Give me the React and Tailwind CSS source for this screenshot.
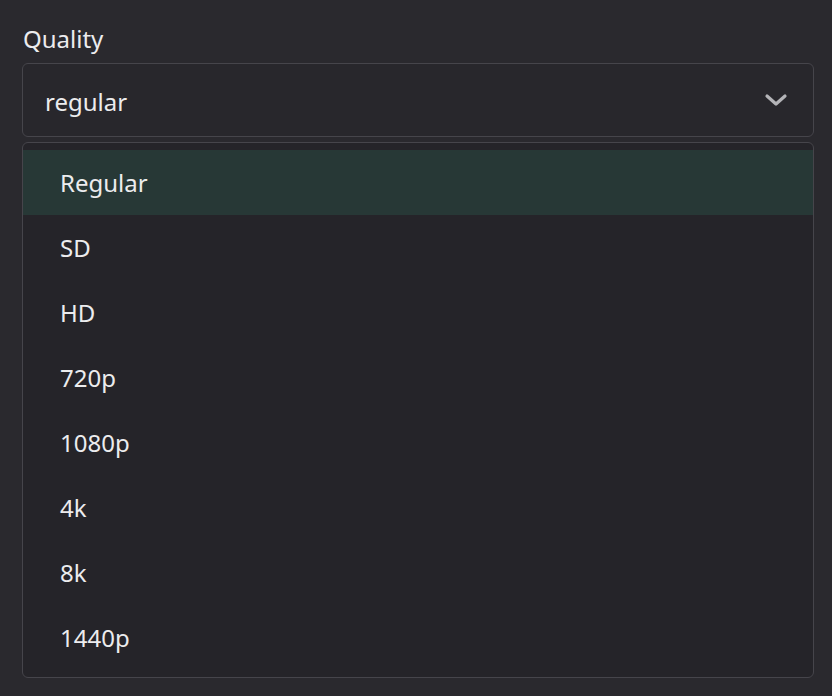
import React from 'react';

const options = ['Regular', 'SD', 'HD', '720p', '1080p', '4k', '8k', '1440p'];

const Chevron = () => (
  <svg width="24" height="24" viewBox="0 0 24 24" fill="none" stroke="#b4b4b8" strokeWidth="3.2" strokeLinecap="round" strokeLinejoin="round">
    <path d="M3 8l9 8 9-8" />
  </svg>
);

export default function App() {
  return (
    <div className="min-h-screen w-full bg-[#2a292e] text-[#ececee] pt-[23px] pl-[22px] pr-[18px]" style={{ fontFamily: '"Noto Sans", "Open Sans", sans-serif' }}>
      <div className="text-[24px] leading-[32px] pl-[1px]">Quality</div>

      {/* select */}
      <div className="mt-[8px] h-[74px] rounded-[6px] border border-[#46454b] bg-[#28272c] flex items-center justify-between pl-[22px] pr-[25px]">
        <span className="text-[24px] leading-none pt-[3px]">regular</span>
        <Chevron />
      </div>

      {/* dropdown */}
      <div className="mt-[5px] rounded-[6px] border border-[#46454b] bg-[#252429] py-[7px]">
        {options.map((o, i) => (
          <div
            key={o}
            className={`h-[65px] flex items-center pl-[37px] text-[24px] ${i === 0 ? 'bg-[#273836]' : ''}`}
          >
            {o}
          </div>
        ))}
      </div>
    </div>
  );
}
